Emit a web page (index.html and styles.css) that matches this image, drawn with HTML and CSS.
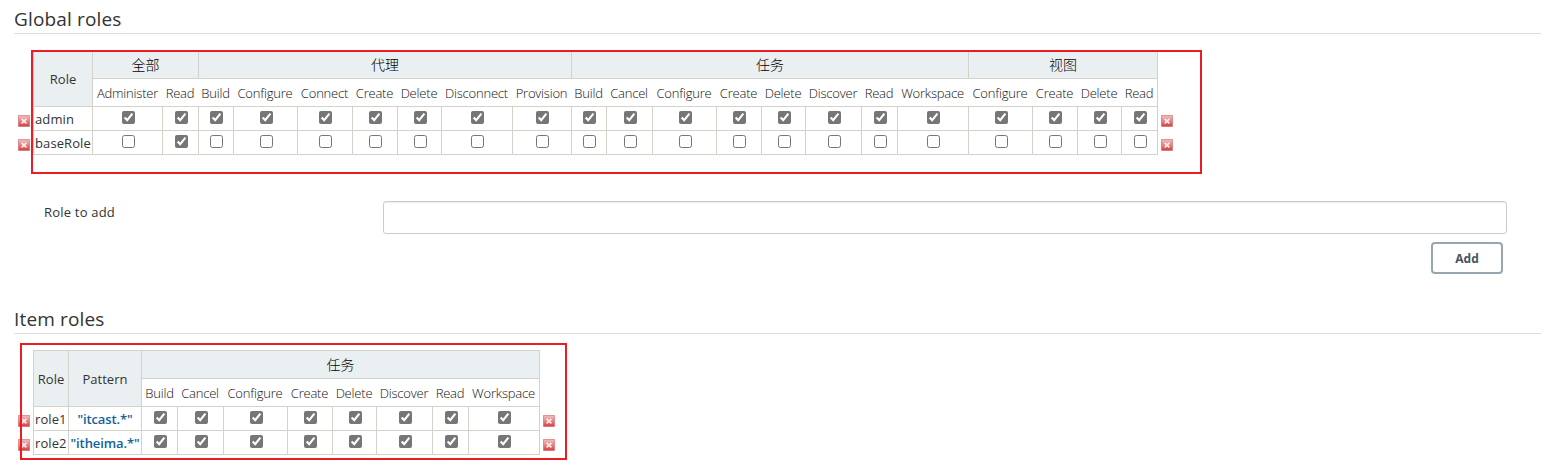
FILE: index.html
```html
<!DOCTYPE html>
<html lang="zh-CN">
<head>
<meta charset="utf-8">
<title>Manage roles</title>
<link rel="stylesheet" href="styles.css">
</head>
<body>
<svg class="defs" width="0" height="0" aria-hidden="true">
<defs>
<linearGradient id="red" x1="0" y1="0" x2="0" y2="1"><stop offset="0" stop-color="#f0bcbc"/><stop offset=".5" stop-color="#e58484"/><stop offset="1" stop-color="#d64040"/></linearGradient>
<symbol id="del" viewBox="0 0 12 12"><rect width="12" height="12" rx=".7" fill="#dc8a8a"/><rect x=".8" y=".8" width="10.4" height="10.4" fill="url(#red)"/><path d="M3.6 3.8L8.4 8.4M8.4 3.8L3.6 8.4" stroke="#fbeeee" stroke-width="1.7"/></symbol>
</defs>
</svg>
<main class="page">
<section class="section section-global">
<h2 class="title">Global roles</h2>
<table class="matrix matrix-global">
<colgroup><col class="w19"><col class="w59"><col class="w70"><col class="w36"><col class="w35"><col class="w64"><col class="w55"><col class="w45"><col class="w44"><col class="w71"><col class="w59"><col class="w35"><col class="w46"><col class="w64"><col class="w45"><col class="w44"><col class="w56"><col class="w36"><col class="w71"><col class="w64"><col class="w45"><col class="w44"><col class="w36"><col class="w19"></colgroup>
<tr class="groups"><td class="tool" rowspan="2"></td><th rowspan="2">Role</th><th colspan="2">全部</th><th colspan="7">代理</th><th colspan="8">任务</th><th colspan="4">视图</th><td class="tool end" rowspan="2"></td></tr>
<tr class="perms"><td class="first">Administer</td><td>Read</td><td>Build</td><td>Configure</td><td>Connect</td><td>Create</td><td>Delete</td><td>Disconnect</td><td>Provision</td><td>Build</td><td>Cancel</td><td>Configure</td><td>Create</td><td>Delete</td><td>Discover</td><td>Read</td><td>Workspace</td><td>Configure</td><td>Create</td><td>Delete</td><td>Read</td></tr>
<tr class="role"><td class="tool"><svg class="del"><use href="#del"/></svg></td><td class="name">admin</td><td><input type="checkbox" checked></td><td><input type="checkbox" checked></td><td><input type="checkbox" checked></td><td><input type="checkbox" checked></td><td><input type="checkbox" checked></td><td><input type="checkbox" checked></td><td><input type="checkbox" checked></td><td><input type="checkbox" checked></td><td><input type="checkbox" checked></td><td><input type="checkbox" checked></td><td><input type="checkbox" checked></td><td><input type="checkbox" checked></td><td><input type="checkbox" checked></td><td><input type="checkbox" checked></td><td><input type="checkbox" checked></td><td><input type="checkbox" checked></td><td><input type="checkbox" checked></td><td><input type="checkbox" checked></td><td><input type="checkbox" checked></td><td><input type="checkbox" checked></td><td><input type="checkbox" checked></td><td class="tool end"><svg class="del"><use href="#del"/></svg></td></tr>
<tr class="role last"><td class="tool"><svg class="del"><use href="#del"/></svg></td><td class="name">baseRole</td><td><input type="checkbox"></td><td><input type="checkbox" checked></td><td><input type="checkbox"></td><td><input type="checkbox"></td><td><input type="checkbox"></td><td><input type="checkbox"></td><td><input type="checkbox"></td><td><input type="checkbox"></td><td><input type="checkbox"></td><td><input type="checkbox"></td><td><input type="checkbox"></td><td><input type="checkbox"></td><td><input type="checkbox"></td><td><input type="checkbox"></td><td><input type="checkbox"></td><td><input type="checkbox"></td><td><input type="checkbox"></td><td><input type="checkbox"></td><td><input type="checkbox"></td><td><input type="checkbox"></td><td><input type="checkbox"></td><td class="tool end"><svg class="del"><use href="#del"/></svg></td></tr>
</table>
<div class="add-row"><label class="add-label" for="role">Role to add</label><input class="add-input" id="role" type="text"></div>
<div class="actions"><button class="add-button" type="button">Add</button></div>
</section>
<section class="section">
<h2 class="title">Item roles</h2>
<table class="matrix matrix-item">
<colgroup><col class="w19"><col class="w35"><col class="w73"><col class="w36"><col class="w46"><col class="w64"><col class="w45"><col class="w44"><col class="w56"><col class="w36"><col class="w71"><col class="w19"></colgroup>
<tr class="groups"><td class="tool" rowspan="2"></td><th rowspan="2">Role</th><th rowspan="2">Pattern</th><th colspan="8">任务</th><td class="tool end" rowspan="2"></td></tr>
<tr class="perms"><td class="first">Build</td><td>Cancel</td><td>Configure</td><td>Create</td><td>Delete</td><td>Discover</td><td>Read</td><td>Workspace</td></tr>
<tr class="role"><td class="tool"><svg class="del"><use href="#del"/></svg></td><td class="name">role1</td><td class="pattern">"itcast.*"</td><td><input type="checkbox" checked></td><td><input type="checkbox" checked></td><td><input type="checkbox" checked></td><td><input type="checkbox" checked></td><td><input type="checkbox" checked></td><td><input type="checkbox" checked></td><td><input type="checkbox" checked></td><td><input type="checkbox" checked></td><td class="tool end"><svg class="del"><use href="#del"/></svg></td></tr>
<tr class="role last"><td class="tool"><svg class="del"><use href="#del"/></svg></td><td class="name">role2</td><td class="pattern">"itheima.*"</td><td><input type="checkbox" checked></td><td><input type="checkbox" checked></td><td><input type="checkbox" checked></td><td><input type="checkbox" checked></td><td><input type="checkbox" checked></td><td><input type="checkbox" checked></td><td><input type="checkbox" checked></td><td><input type="checkbox" checked></td><td class="tool end"><svg class="del"><use href="#del"/></svg></td></tr>
</table>
</section>
</main>
<div class="frame frame-global"></div>
<div class="frame frame-item"></div>
</body>
</html>
```
FILE: styles.css
```css
* { box-sizing: border-box; }
body { margin: 0; width: 1544px; height: 474px; overflow: hidden; position: relative; background: #fff; color: #333; font: 13px/20px "Open Sans", "Noto Sans CJK SC", sans-serif; }
.defs { display: block; position: absolute; }
.page { padding: 0 3px 0 14px; }
.section-global { height: 300px; }
.title { margin: 0; height: 34px; padding-top: 5px; border-bottom: 1px solid #ddd; font-size: 19px; line-height: 28px; font-weight: 500; letter-spacing: .15px; }
.matrix { table-layout: fixed; border-collapse: separate; border-spacing: 0; margin-top: 16px; }
.matrix-global { width: 1162px; }
.matrix-item { width: 544px; }
.matrix th, .matrix td { padding: 0; border: 0 solid #d3d3cb; border-width: 1px 0 0 1px; text-align: center; white-space: nowrap; vertical-align: middle; overflow: visible; }
.matrix th { background: #eaeff2; font-weight: 400; }
.matrix .tool { border-width: 0; vertical-align: top; text-align: left; }
.matrix .tool.end { border-left-width: 1px; }
.groups, .perms { height: 28px; }
.matrix .groups th[colspan] { font-size: 14px; font-weight: 300; color: #000; }
.perms td { font-weight: 300; letter-spacing: -.2px; color: #111; }
.matrix .perms td:not(.first) { border-left-width: 0; }
.role { height: 24px; }
.matrix .role td { vertical-align: top; }
.matrix .role .name, .matrix .role .pattern { line-height: 20px; padding-top: 2px; }
.matrix .role .name { text-align: left; padding-left: 1px; letter-spacing: .1px; }
.matrix .role .pattern { color: #15619c; font-weight: 600; letter-spacing: -.1px; }
.role.last { height: 25px; }
.matrix .role.last td:not(.tool) { border-bottom-width: 1px; }
.role input { display: inline-block; width: 13px; height: 13px; margin: 4px 3px 0 4px; accent-color: #767676; vertical-align: top; }
.del { display: block; width: 12px; height: 12px; margin: 9px 0 0 4px; }
.end .del { margin-left: 3px; }
.add-row { display: flex; margin-top: 46px; padding-left: 30px; }
.add-label { width: 339px; padding-top: 1px; letter-spacing: .2px; }
.add-input { width: 1124px; height: 33px; border: 1px solid #ccc; border-radius: 3px; box-shadow: inset 0 1px 1px #00000013; }
.actions { display: flex; justify-content: flex-end; margin-top: 8px; padding-right: 38px; }
.add-button { width: 72px; height: 32px; padding: 1px 0 0; border: 2px solid #98a6af; border-radius: 4px; background: #fff; color: #435362; font: 700 12px/20px "Open Sans", sans-serif; }
.w19 { width: 19px; } .w35 { width: 35px; } .w36 { width: 36px; }
.w44 { width: 44px; } .w45 { width: 45px; } .w46 { width: 46px; }
.w55 { width: 55px; } .w56 { width: 56px; } .w59 { width: 59px; }
.w64 { width: 64px; } .w70 { width: 70px; } .w71 { width: 71px; } .w73 { width: 73px; }
.frame { position: absolute; border: 2px solid #ed1c24; pointer-events: none; }
.frame-global { left: 31px; top: 50px; width: 1171px; height: 124px; }
.frame-item { left: 20px; top: 343px; width: 547px; height: 117px; }
```
